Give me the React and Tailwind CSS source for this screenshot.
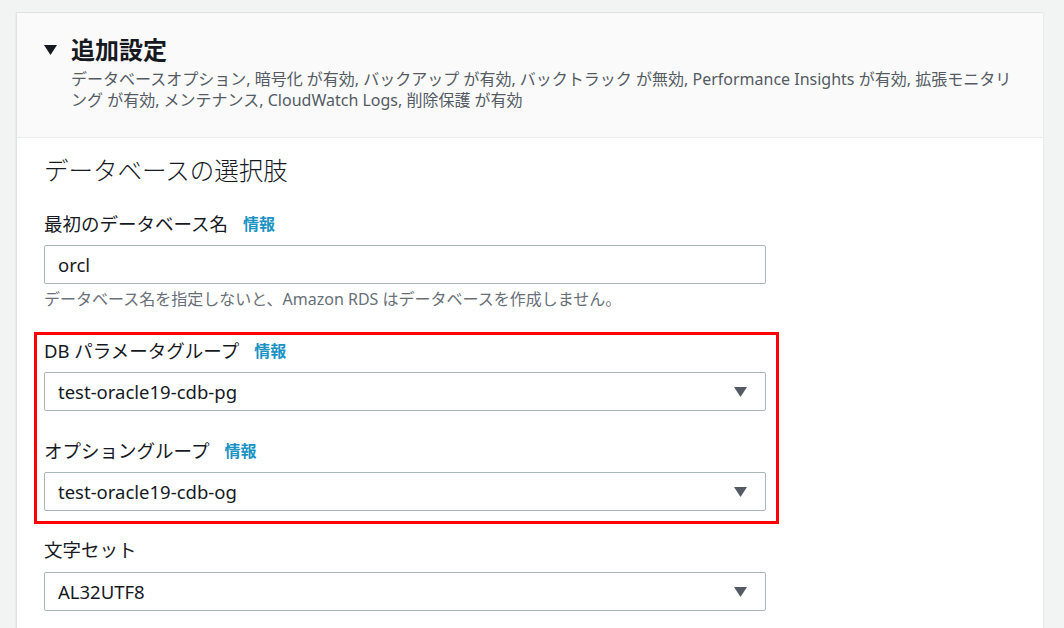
import React from 'react';

const font = { fontFamily: '"Noto Sans", "Noto Sans CJK JP", sans-serif' };

const Info = () => (
    <span className="ml-[15px] text-[16px] font-bold text-[#1a93c4]">情報</span>
);

const Arrow = () => (
    <svg width="13" height="10" viewBox="0 0 13 10" className="shrink-0">
        <path d="M0 0 H13 L6.5 10 Z" fill="#545b64" />
    </svg>
);

const SelectBox = ({ value }) => (
    <div className="flex h-[39px] w-[722px] items-center justify-between rounded-[2px] border border-[#aab7b8] bg-white pl-[13px] pr-[18px]">
        <span className="text-[18.5px] text-[#16191f]">{value}</span>
        <Arrow />
    </div>
);

const Label = ({ text, info }) => (
    <div className="flex h-[26px] items-center text-[18.5px] text-[#16191f]">
        <span>{text}</span>
        {info && <Info />}
    </div>
);

const App = () => {
    return (
        <div className="min-h-[628px] bg-[#f2f3f3] pl-4 pr-[21px] pt-3" style={font}>
            <div className="border-l border-t border-[#dfe3e3] shadow-[0_1px_1px_rgba(0,28,36,0.2)]">
                {/* header */}
                <div className="border-b border-[#eaeded] bg-[#fafafa] pb-[26px] pl-[27px] pr-[27px] pt-[21px]">
                    <div className="flex items-center">
                        <svg width="13" height="10" viewBox="0 0 13 10" className="mr-[14px]">
                            <path d="M0 0 H13 L6.5 10 Z" fill="#16191f" />
                        </svg>
                        <h2 className="text-[24px] font-bold leading-[32px] text-[#16191f]">追加設定</h2>
                    </div>
                    <div className="mt-[3px] pl-[27px] text-[16px] leading-[21px] text-[#545b64]">
                        <div className="whitespace-nowrap">データベースオプション, 暗号化 が有効, バックアップ が有効, バックトラック が無効, Performance Insights が有効, 拡張モニタリ</div>
                        <div className="whitespace-nowrap">ング が有効, メンテナンス, CloudWatch Logs, 削除保護 が有効</div>
                    </div>
                </div>

                {/* body */}
                <div className="bg-white pl-[27px] pt-[17px] pb-[20px]">
                    <h3 className="text-[24.5px] font-light leading-[32px] text-[#16191f]">データベースの選択肢</h3>

                    <div className="mt-[24px]">
                        <Label text="最初のデータベース名" info />
                        <div className="mt-[8px] flex h-[39px] w-[722px] items-center rounded-[2px] border border-[#aab7b8] bg-white pl-[13px]">
                            <span className="text-[18.5px] text-[#16191f]">orcl</span>
                        </div>
                        <p className="mt-[5px] text-[16px] leading-[21px] text-[#687078]">
                            データベース名を指定しないと、Amazon RDS はデータベースを作成しません。
                        </p>
                    </div>

                    {/* highlighted group */}
                    <div className="-ml-[10px] mt-[22px] w-[745px] border-[3px] border-[#ff0000] pb-[10px] pl-[7px] pt-[3px]">
                        <Label text="DB パラメータグループ" info />
                        <div className="mt-[8px]">
                            <SelectBox value="test-oracle19-cdb-pg" />
                        </div>
                        <div className="mt-[27px]">
                            <Label text="オプショングループ" info />
                        </div>
                        <div className="mt-[8px]">
                            <SelectBox value="test-oracle19-cdb-og" />
                        </div>
                    </div>

                    <div className="mt-[13px]">
                        <Label text="文字セット" />
                        <div className="mt-[9px]">
                            <SelectBox value="AL32UTF8" />
                        </div>
                    </div>
                </div>
            </div>
        </div>
    );
};

export default App;
